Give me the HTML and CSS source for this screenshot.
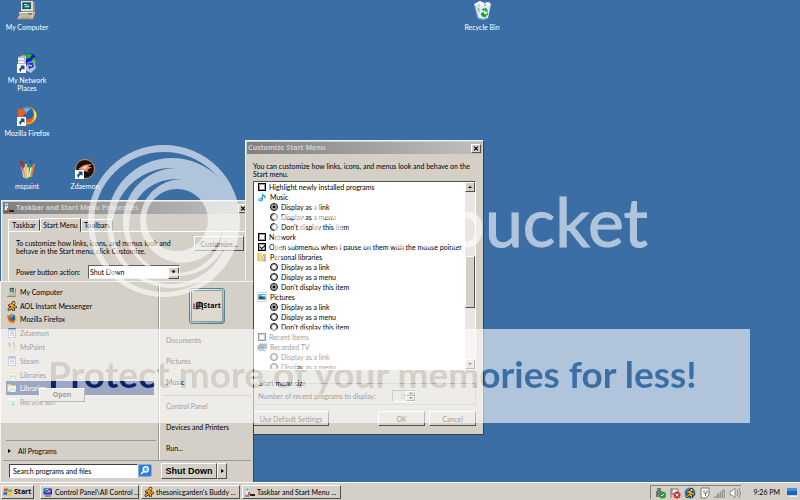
FILE: index.html
```html
<!DOCTYPE html>
<html lang="en">
<head>
<meta charset="utf-8">
<title>Desktop</title>
<link rel="stylesheet" href="styles.css">
</head>
<body>
<svg class="defs" aria-hidden="true">
  <symbol id="computer" viewBox="0 0 20 20"><path d="M5 1h11l2 2v9H5z" fill="#8d8d84"/><path d="M4 1h12v10H4z" fill="#e0dccd"/><path d="M5.500 2.500h8.500v6.500H5.500z" fill="#123"/><path d="M6.500 3.500h7v5h-7z" fill="#1d8a92"/><path d="M7 4h3v1H7zM8 6h4v1H8z" fill="#a9e6df"/><path d="M2 12h16v3H2z" fill="#b9b5a4"/><path d="M3 12h13v1H3z" fill="#f3efdf"/><path d="M11 13.500h4v.8h-4z" fill="#333"/><path d="M3 15h14l-1 4H0z" fill="#d8d4c0"/><path d="M0 18.500h16l1-3.500 1 1-1 4H0z" fill="#777566"/><path d="M4 16h11M3 17.500h11" stroke="#8b887a" stroke-dasharray="1 .6"/></symbol>
  <symbol id="shortcut" viewBox="0 0 9 9"><path d="M0 0h9v9H0z" fill="#fff"/><path d="M3 1.500h4.500V6L6 4.700Q3.500 5.500 4 8 0 5.500 4.500 3z" fill="#124a8d"/></symbol>
  <symbol id="network" viewBox="0 0 20 20"><circle cx="13" cy="7" r="6.500" fill="#1616d2"/><path d="M8 3q4-4 7-1l-2 3-4 1zM14 7l4-3q3 4 0 7z" fill="#24b52c"/><path d="M1 4l6-2 2 1v9H1z" fill="#bbb"/><path d="M1 5h6v2H1zM1 8h6v2H1z" fill="#eee"/><path d="M11 9l6-1 2 7-5 5-6-3z" fill="#b8c4cf"/><path d="M11 10l5-1 1 5-5 2z" fill="#2838c7"/><path d="M12 12l3 1" stroke="#fff"/><use href="#shortcut" x="0" y="11" width="9" height="9"/></symbol>
  <symbol id="fox" viewBox="0 0 20 20"><circle cx="10.500" cy="9.500" r="9" fill="#f0a11d"/><circle cx="10" cy="8" r="7" fill="#1e66ad"/><path d="M6 3q4-3 8 0l-3 2-2 3z" fill="#68b5e4"/><path d="M1 2l3 2q3-1 4 1l2 2-4 2q1 5 6 4 5-1 5-6 3 5-1 8-6 4-11-1Q0 10 1 2z" fill="#e9601c"/><path d="M16 4q3 8-2 12 7-2 5-10z" fill="#ffda45"/></symbol>
  <symbol id="paint" viewBox="0 0 20 20"><path d="M4 8h12l-2 10q-4 3-8 0z" fill="#dce6ec" opacity=".75"/><path d="M5 4l3 14" stroke="#c92f27" stroke-width="2"/><path d="M9 5v14" stroke="#f5c72e" stroke-width="2"/><path d="M13 3l-1 16" stroke="#29a245" stroke-width="2"/><path d="M17 5l-3 13" stroke="#f47c2c" stroke-width="2"/><path d="M3 1l4 2-1 4-3-2z" fill="#8d3d2d"/><path d="M13 0l2 2-1 4-2-3z" fill="#1662bf"/><path d="M7 9v9M11 9v9M14 9l-2 9" stroke="#fff"/></symbol>
  <symbol id="daemon" viewBox="0 0 20 20"><circle cx="10" cy="10" r="9.500" fill="#171311" stroke="#d88d6a"/><path d="M3 10l6-4 8-1-4 3h4l-5 3 2 2-5-1-5 4 2-5z" fill="#e98f67"/><path d="M7 9l6-3-3 4z" fill="#ffe1cc"/></symbol>
  <symbol id="bin" viewBox="0 0 20 20"><path d="M2 4l6-3 5 2 4-1 2 2-3 14q-5 3-10 0z" fill="#dceaf4"/><path d="M3 4l5-3 3 3 5-2 2 3-7 2z" fill="#fff"/><path d="M5 7l3 2-1 5zM12 3l3 2-3 2z" fill="#9bb9e1"/><path d="M5 5l3-1v3z" fill="#efc64c"/><path d="M10 9l4-1 2 3-2 1-1-2-2 1zM9 13l3-1v2h3l-1 3h-3l-2-2zM15 11l1 3-1 2" fill="#18a331"/><path d="M3 6l3 12q5 2 9 0" fill="none" stroke="#8aa9c0"/></symbol>
  <symbol id="man" viewBox="0 0 20 20"><g fill="none" stroke="#201b13" stroke-width="5.500" stroke-linecap="round" stroke-linejoin="round"><path d="M11 8l-2 5 4 2v3M9 13l-5 4M5 9l5-2 4 4 3 1"/></g><circle cx="13" cy="4" r="3.800" fill="#201b13"/><g fill="none" stroke="#f5ac20" stroke-width="2.800" stroke-linecap="round" stroke-linejoin="round"><path d="M11 8l-2 5 4 2v3M9 13l-5 4M5 9l5-2 4 4 3 1"/></g><circle cx="13" cy="4" r="2.500" fill="#ffc63a"/></symbol>
  <symbol id="doc" viewBox="0 0 20 20"><path d="M3 1h14v18H3z" fill="#fff" stroke="#5868a0" stroke-width="1.500"/><path d="M3 1h14v4H3z" fill="#415bb8"/><path d="M6 8h8M6 11h8M6 15h4" stroke="#333a66" stroke-width="1.500"/><path d="M12 13h3v3h-3z" fill="#c44"/></symbol>
  <symbol id="folder" viewBox="0 0 20 20"><path d="M1 3h6l2 2h9v12H1z" fill="#e9bd4e"/><path d="M3 7h15v10H3z" fill="#ffe38a"/><path d="M6 11h11v7H6z" fill="#5da7de"/><path d="M8 14h7v4H8z" fill="#d8f0ff"/></symbol>
  <symbol id="people" viewBox="0 0 20 20"><path d="M1 3l8-2v18l-8-1z" fill="#d9a940"/><path d="M3 2h7v16H3z" fill="#f6d778"/><path d="M12 4h6v15h-7z" fill="#e8bd54"/><path d="M13 7q3 1 1 5l2 5h-5l1-5q-2-4 1-5z" fill="#eef5f8" stroke="#6c8ea0"/></symbol>
  <symbol id="note" viewBox="0 0 20 20"><path d="M11 1q1 4 6 7 2 4-2 6 1-4-3-6v7q0 4-5 4-5 0-5-4 1-4 7-3z" fill="#2e9bda"/><ellipse cx="6" cy="15" rx="3" ry="2" fill="#9be2ff"/></symbol>
  <symbol id="picture" viewBox="0 0 20 20"><path d="M0 1h20v18H0z" fill="#9fb3ba"/><path d="M1 2h18v16H1z" fill="#fff"/><path d="M3 4h14v7H3z" fill="#4fb3ea"/><path d="M3 10l5-2 4 2 5 1v4H3z" fill="#20616e"/><path d="M9 6h7v2H9z" fill="#fff"/></symbol>
  <symbol id="tv" viewBox="0 0 20 20"><path d="M4 3h16v11H4z" fill="#3d6d9b"/><path d="M1 7l13-3v11H1z" fill="#234b7a"/><path d="M4 16h14v2H4z" fill="#57626d"/></symbol>
  <symbol id="flag" viewBox="0 0 20 20"><path d="M2 4q4-3 8 0L9 9Q5 7 1 9z" fill="#e5502c"/><path d="M11 4q4 3 8 0l-1 5q-4 3-8 0z" fill="#6bb33c"/><path d="M1 11q4-3 8 0l-1 6q-4-3-8 0z" fill="#3672d4"/><path d="M10 11q4 3 8 0l-1 6q-4 3-8 0z" fill="#f8c52e"/></symbol>
  <symbol id="oldflag" viewBox="0 0 20 20"><path d="M6 3q7-3 14 1v14q-7-4-14-1z" fill="#111"/><path d="M0 5h5v3H0zM0 9h5v3H0z" fill="#c0503a"/><path d="M0 13h5v3H0z" fill="#3a56b8"/><path d="M7 4q3-1 5 0v5H7z" fill="#d33a2c"/><path d="M13 4l5 1v5l-5-1z" fill="#2fa04a"/><path d="M7 11h5v4H7z" fill="#2b5fd0"/><path d="M13 11l5 1v4l-5-1z" fill="#f0c432"/></symbol>
  <symbol id="control" viewBox="0 0 20 20"><path d="M1 3h17v12H1z" fill="#162fc6"/><path d="M1 3h8v6H1z" fill="#1ba6c2"/><path d="M2 13l7-5 3 1 7-9-5 12H6z" fill="#e64bc1"/><path d="M8 4l6 6" stroke="#fff" stroke-width="2"/><path d="M4 17h12v2H4z" fill="#555"/></symbol>
  <symbol id="settings" viewBox="0 0 20 20"><path d="M2 1h6v13H2z" fill="#eee"/><path d="M3 3h4v4H3z" fill="#28a8df"/><path d="M6 10h4v6H6z" fill="#d65538"/><path d="M10 14h10v4H10z" fill="#222"/><path d="M0 17h8v2H0z" fill="#244e86"/></symbol>
</svg>

<main class="desktop">
  <a class="shortcut mycomputer" href="#"><svg><use href="#computer"/></svg><span>My Computer</span></a>
  <a class="shortcut places" href="#"><svg><use href="#network"/></svg><span>My Network Places</span></a>
  <a class="shortcut firefox" href="#"><svg><use href="#fox"/><use href="#shortcut" x="0" y="11" width="9" height="9"/></svg><span>Mozilla Firefox</span></a>
  <a class="shortcut mspaint" href="#"><svg><use href="#paint"/></svg><span>mspaint</span></a>
  <a class="shortcut zdaemon" href="#"><svg><use href="#daemon"/><use href="#shortcut" x="0" y="11" width="9" height="9"/></svg><span>Zdaemon</span></a>
  <a class="shortcut recycle" href="#"><svg><use href="#bin"/></svg><span>Recycle Bin</span></a>

  <section class="window properties">
    <header class="title"><svg><use href="#settings"/></svg><h2>Taskbar and Start Menu Properties</h2><button class="close" aria-label="Close"><svg viewBox="0 0 8 8"><path d="M1 1l6 6M7 1L1 7"/></svg></button></header>
    <nav class="tabs"><button>Taskbar</button><button class="current">Start Menu</button><button>Toolbars</button></nav>
    <div class="panel">
      <div class="intro"><p>To customize how links, icons, and menus look and<br>behave in the Start menu, click Customize.</p><button class="btn">Customize...</button></div>
      <div class="power"><label for="power">Power button action:</label><span class="drop"><select id="power"><option>Shut Down</option></select></span></div>
    </div>
  </section>

  <section class="window customize">
    <header class="title"><h2>Customize Start Menu</h2><button class="close" aria-label="Close"><svg viewBox="0 0 8 8"><path d="M1 1l6 6M7 1L1 7"/></svg></button></header>
    <div class="content">
      <p>You can customize how links, icons, and menus look and behave on the<br>Start menu.</p>
      <div class="listbox">
        <div class="list">
          <label class="row"><input type="checkbox">Highlight newly installed programs</label>
          <div class="row"><svg><use href="#note"/></svg>Music</div>
          <label class="row sub"><input type="radio" name="music" checked>Display as a link</label>
          <label class="row sub"><input type="radio" name="music">Display as a menu</label>
          <label class="row sub"><input type="radio" name="music">Don't display this item</label>
          <label class="row"><input type="checkbox">Network</label>
          <label class="row"><input type="checkbox" checked>Open submenus when I pause on them with the mouse pointer</label>
          <div class="row"><svg><use href="#people"/></svg>Personal libraries</div>
          <label class="row sub"><input type="radio" name="personal">Display as a link</label>
          <label class="row sub"><input type="radio" name="personal">Display as a menu</label>
          <label class="row sub"><input type="radio" name="personal" checked>Don't display this item</label>
          <div class="row"><svg><use href="#picture"/></svg>Pictures</div>
          <label class="row sub"><input type="radio" name="pictures" checked>Display as a link</label>
          <label class="row sub"><input type="radio" name="pictures">Display as a menu</label>
          <label class="row sub"><input type="radio" name="pictures">Don't display this item</label>
          <label class="row"><input type="checkbox">Recent Items</label>
          <div class="row"><svg><use href="#tv"/></svg>Recorded TV</div>
          <label class="row sub"><input type="radio" name="tv">Display as a link</label>
          <label class="row sub"><input type="radio" name="tv">Display as a menu</label>
        </div>
        <div class="scroll"><button aria-label="Scroll up"><i class="up"></i></button><div class="track"><div class="thumb"></div></div><button aria-label="Scroll down"><i class="down"></i></button></div>
      </div>
      <fieldset><legend>Start menu size</legend><label for="recent">Number of recent programs to display:</label><span class="spinner"><input id="recent" type="text" value="0" disabled><span class="steps"><button aria-label="More"><i class="up"></i></button><button aria-label="Fewer"><i class="down"></i></button></span></span></fieldset>
      <footer><button class="btn wide">Use Default Settings</button><button class="btn">OK</button><button class="btn">Cancel</button></footer>
    </div>
  </section>

  <section class="startmenu">
    <div class="columns">
      <div class="programs">
        <nav class="apps">
          <a href="#"><svg><use href="#computer"/></svg>My Computer</a>
          <a href="#"><svg><use href="#man"/></svg>AOL Instant Messenger</a>
          <a href="#"><svg><use href="#fox"/></svg>Mozilla Firefox</a>
          <a href="#"><svg><use href="#doc"/></svg>Zdaemon</a>
          <a href="#"><svg><use href="#paint"/></svg>MsPaint</a>
          <a href="#"><svg><use href="#doc"/></svg>Steam</a>
          <a href="#"><svg><use href="#folder"/></svg>Libraries</a>
          <a href="#" class="selected"><svg><use href="#folder"/></svg>Libraries</a>
          <a href="#"><svg><use href="#bin"/></svg>Recycle Bin</a>
        </nav>
        <a class="all" href="#"><i class="right"></i>All Programs</a>
      </div>
      <nav class="places-list">
        <div class="user"><div class="photo"><svg><use href="#oldflag"/></svg><b>Start</b></div></div>
        <a href="#">Documents</a><a href="#">Pictures</a><a href="#">Music</a><hr><a href="#">Control Panel</a><a href="#">Devices and Printers</a><a href="#">Run...</a>
      </nav>
    </div>
    <div class="bottom">
      <input class="search" type="text" aria-label="Search" value="Search programs and files">
      <button class="go" aria-label="Search"><svg viewBox="0 0 14 14"><circle cx="8" cy="5.500" r="3.500" fill="#5db7ff" stroke="#fff" stroke-width="1.500"/><path d="M5.500 8L2 11.500" stroke="#fff" stroke-width="2"/></svg></button>
      <div class="shutdown"><button class="main">Shut Down</button><button class="more" aria-label="More"><i class="right"></i></button></div>
    </div>
    <button class="popup">Open</button>
  </section>

  <footer class="taskbar">
    <button class="task start"><svg><use href="#flag"/></svg>Start</button>
    <button class="task"><svg><use href="#control"/></svg>Control Panel\All Control ...</button>
    <button class="task"><svg><use href="#man"/></svg>thesonicgarden's Buddy ...</button>
    <button class="task"><svg><use href="#settings"/></svg>Taskbar and Start Menu ...</button>
    <div class="tray">
      <svg viewBox="0 0 12 12"><path d="M3 1h4v3h1v6H2V4h1z" fill="#777"/><circle cx="8.500" cy="8" r="3.500" fill="#24a237"/><path d="M7 8l1 1 2-2" stroke="#fff" fill="none"/></svg>
      <svg viewBox="0 0 12 12"><path d="M2 1v10M3 2h6v5H3z" stroke="#777" fill="#eee"/><circle cx="8" cy="8" r="3.500" fill="#e12b2b"/><path d="M6.500 6.500l3 3M9.500 6.500l-3 3" stroke="#fff"/></svg>
      <svg viewBox="0 0 12 12"><circle cx="6" cy="6" r="5.500" fill="#2489dc"/><use href="#man" x="1" y="1" width="10" height="10"/></svg>
      <svg viewBox="0 0 12 12"><path d="M2 1h8v7l-3 3H2z" fill="#fff" stroke="#777"/><path d="M5 3v3h3V3M6.500 6v3" stroke="#777" fill="none"/></svg>
      <svg viewBox="0 0 12 12"><path d="M1 11V9h1v2M3.500 11V7h1v4M6 11V5h1v6M8.500 11V3h2v8" fill="#bbb" stroke="#777" stroke-width=".6"/></svg>
      <svg viewBox="0 0 12 12"><path d="M1 4h2l3-3v10L3 8H1z" fill="#fff" stroke="#777" stroke-width=".8"/><path d="M8 3q2 3 0 6M10 1q3 5 0 10" fill="none" stroke="#888"/></svg>
    </div>
    <time>9:26 PM</time>
    <button class="show" aria-label="Show desktop"><svg viewBox="0 0 12 12"><path d="M1 2h10v7H1z" fill="#1c63b9"/><path d="M1 2h10v3H1z" fill="#3e94dc"/><path d="M3 10h8v1H3z" fill="#eee"/></svg></button>
  </footer>

  <svg class="brand" viewBox="0 0 570 160">
    <g fill="#fff" fill-rule="evenodd">
      <path d="M2 78a76 76 0 1 0 152 0a76 76 0 1 0-152 0zM8 79a70 70 0 1 1 140 0a70 70 0 1 1-140 0z"/>
      <path d="M21 80a65 65 0 1 0 130 0a65 65 0 1 0-130 0zM27 83a58 58 0 1 1 116 0a58 58 0 1 1-116 0z"/>
      <path d="M37 79a54 54 0 1 0 108 0a54 54 0 1 0-108 0zM43 83a47 47 0 1 1 94 0a47 47 0 1 1-94 0z"/>
      <path d="M54 78a42 42 0 1 0 84 0a42 42 0 1 0-84 0zM60 77a31 31 0 1 1 62 0a31 31 0 1 1-62 0z"/>
    </g>
    <text x="562" y="104" text-anchor="end">photobucket</text>
  </svg>
  <svg class="banner" viewBox="0 0 750 94">
    <mask id="cutout"><rect width="750" height="94" fill="#fff"/><text x="48" y="59">Protect more of your memories for less!</text></mask>
    <rect width="750" height="94" fill="#fff" mask="url(#cutout)"/>
  </svg>
</main>
</body>
</html>
```
FILE: styles.css
```css
* { box-sizing: border-box; }
body { margin: 0; font: 7px/8px Lato, "Liberation Sans", sans-serif; color: #000; }
button, input, select { font: inherit; color: inherit; margin: 0; padding: 0; border: 0; border-radius: 0; background: none; }
a { color: inherit; text-decoration: none; }
h2, p { margin: 0; font: inherit; }
svg { flex: none; display: block; }
.defs { position: absolute; width: 0; height: 0; }
.desktop { position: relative; height: 100vh; overflow: hidden; background: #3a6ea5; white-space: nowrap; }

.shortcut { position: absolute; display: flex; flex-direction: column; align-items: center; gap: 3px; width: 54px; padding: 0 2px; color: #fff; text-align: center; white-space: normal; }
.shortcut svg { width: 20px; height: 20px; }
.mycomputer { left: 0; top: 0; }
.places { left: 0; top: 53px; }
.firefox { left: 0; top: 106px; }
.mspaint { left: 0; top: 159px; }
.zdaemon { left: 58px; top: 159px; }
.recycle { left: 455px; top: 0; }

.window, .startmenu { position: absolute; background: #d4d0c8; border: 1px solid; border-color: #f4f2ee #404040 #404040 #f4f2ee; }
.window { padding: 1px; }
.title { display: flex; align-items: center; height: 12px; padding: 0 1px; background: linear-gradient(90deg, #808080, #c0c0c0); color: #d4d0c8; }
.title h2 { flex: 1; font-family: "Open Sans", sans-serif; font-weight: bold; }
.title > svg { width: 10px; height: 10px; margin-right: 2px; }
.btn, .close, .scroll button, .thumb, .steps button, .task, .shutdown button, .popup { background: #d4d0c8; border: 1px solid; border-color: #fff #505050 #505050 #fff; }
.close { width: 10px; height: 9px; padding: 1px; }
.close svg { width: 6px; height: 5px; stroke: #000; stroke-width: 2; }
.btn { height: 15px; }

.properties { left: 1px; top: 200px; width: 250px; height: 100px; }
.tabs { display: flex; align-items: flex-end; height: 17px; padding-left: 5px; }
.tabs button { width: 32px; height: 12px; border: 1px solid; border-color: #fff #404040 transparent #fff; background: #d4d0c8; }
.tabs .current { width: 41px; height: 14px; margin-bottom: -1px; }
.panel { margin-left: 5px; padding: 4px 4px 0 7px; border: 1px solid #fff; border-bottom: 0; height: 70px; }
.intro { display: flex; justify-content: space-between; }
.intro p { padding-top: 3px; }
.intro .btn { width: 50px; }
.power { display: flex; align-items: center; gap: 4px; margin-top: 10px; }
.power label { width: 68px; }
.drop { position: relative; width: 92px; height: 14px; border: 1px solid; border-color: #606060 #eee #eee #606060; background: #fff; }
.drop select { appearance: none; width: 100%; height: 12px; padding-left: 1px; }
.drop::after { content: "▼"; position: absolute; right: 0; top: 1px; width: 9px; height: 10px; border: 1px solid; border-color: #fff #505050 #505050 #fff; background: #d4d0c8; font-size: 6px; line-height: 8px; text-align: center; pointer-events: none; }

.customize { left: 245px; top: 140px; width: 239px; }
.content { padding: 8px 6px 7px; }
.listbox { display: flex; justify-content: space-between; height: 189px; margin-top: 3px; border: 1px solid; border-color: #505050 #fff #fff #505050; background: #fff; overflow: hidden; }
.row { display: flex; align-items: center; gap: 3px; height: 10px; padding-left: 4px; }
.row svg { width: 10px; height: 10px; margin: 0 0 0 -1px; }
.sub { padding-left: 16px; }
.row input { appearance: none; flex: none; width: 8px; height: 8px; border: 1px solid #000; outline: 1px solid #0006; outline-offset: -2px; background: #fff; }
.row input[type="radio"] { border-radius: 50%; }
.row input[type="radio"]:checked { background: radial-gradient(circle, #000 0 1px, #fff 2px); }
.row input[type="checkbox"]:checked::after { content: ""; display: block; width: 4px; height: 2px; margin: 1px; border: solid #000; border-width: 0 0 1px 1px; transform: rotate(-45deg); }
.scroll { display: flex; flex-direction: column; width: 10px; background: #e9e7e3; }
.scroll button, .scroll .thumb { display: flex; align-items: center; justify-content: center; width: 10px; height: 10px; }
.scroll .track { flex: 1; padding-top: 64px; }
.scroll .thumb { height: 52px; }
.up, .down, .right { width: 0; height: 0; border: 2px solid transparent; }
.up { border-top: 0; border-bottom-color: #000; }
.down { border-bottom: 0; border-top-color: #000; }
.right { border-right: 0; border-left: 3px solid #000; }
fieldset { display: flex; align-items: center; height: 26px; margin: 9px 0 0; padding: 0 4px; border: 1px solid #aaa; }
legend { padding: 0 1px; }
fieldset label { width: 134px; }
.spinner { display: flex; width: 24px; height: 12px; border: 1px solid; border-color: #808080 #fff #fff #808080; }
.spinner input { width: 13px; text-align: right; color: #808080; padding-right: 1px; }
.steps { display: flex; flex-direction: column; width: 9px; }
.steps button { display: flex; align-items: center; justify-content: center; height: 5px; }
.content footer { display: flex; gap: 4px; margin-top: 6px; }
.content footer .btn { width: 47px; }
.content footer .wide { width: 76px; margin-right: auto; }

.startmenu { left: 0; top: 281px; width: 254px; height: 202px; padding: 2px; display: flex; flex-direction: column; }
.columns { display: flex; flex: 1; }
.programs { width: 156px; padding: 1px 2px 0 3px; display: flex; flex-direction: column; justify-content: space-between; border-right: 1px solid #999; }
.apps { display: grid; grid-template-rows: repeat(9, 1fr); height: 124px; }
.apps a { display: flex; align-items: center; gap: 3px; padding-left: 1px; width: 148px; }
.apps svg { width: 10px; height: 10px; }
.apps .selected { background: #0a246a; color: #fff; }
.all { display: flex; align-items: center; gap: 7px; height: 20px; padding-left: 2px; border-top: 1px solid #999; }
.places-list { flex: 1; display: flex; flex-direction: column; border-left: 1px solid #fff; padding: 4px 0 0 3px; }
.places-list a { height: 21px; padding: 6px 0 0 3px; }
.places-list hr { width: 100%; margin: 2px 0 0; border: 0; border-top: 1px solid #999; }
.user { width: 36px; height: 36px; margin: 0 0 6px 26px; padding: 1px; background: linear-gradient(135deg, #fff, #6aaeb9); border: 1px solid #55858c; border-radius: 3px; }
.photo { display: flex; align-items: center; justify-content: center; height: 32px; background: #ddd9d1; border: 1px solid #999; overflow: hidden; font-family: "Open Sans", sans-serif; }
.photo svg { width: 10px; height: 10px; }
.bottom { display: flex; align-items: center; height: 20px; padding-left: 6px; border-top: 1px solid #999; }
.search { width: 129px; height: 14px; padding: 0 3px; border: 1px solid; border-color: #404040 #fff #fff #404040; background: #fff; }
.go { width: 14px; height: 13px; background: #3579d2; border: 1px solid #78aee8; border-radius: 2px; }
.go svg { width: 12px; height: 11px; }
.shutdown { display: flex; height: 16px; margin-left: 9px; font: bold 9px/10px "Liberation Sans", sans-serif; }
.shutdown .main { width: 56px; }
.shutdown .more { display: flex; align-items: center; justify-content: center; width: 10px; }
.popup { position: absolute; left: 38px; top: 106px; width: 46px; height: 14px; font-family: "Open Sans", sans-serif; font-weight: bold; }

.taskbar { position: absolute; left: 0; right: 0; bottom: 0; display: flex; align-items: center; gap: 2px; height: 18px; padding: 1px 2px 0 1px; background: #d4d0c8; border-top: 1px solid #fff; }
.task { display: flex; align-items: center; gap: 2px; width: 99px; height: 14px; padding: 0 2px; }
.task svg { width: 10px; height: 10px; }
.start { width: 33px; padding: 0 1px; margin-right: 4px; font-family: "Open Sans", sans-serif; font-weight: bold; gap: 1px; }
.tray { display: flex; align-items: center; gap: 3px; height: 14px; margin-left: auto; padding-left: 3px; border-left: 1px solid #808080; border-top: 1px solid #808080; }
.tray svg, .show svg { width: 12px; height: 12px; }
.taskbar time { padding: 0 4px 0 11px; }

.brand, .banner { position: absolute; left: 0; pointer-events: none; opacity: .6; }
.brand { left: 86px; top: 143px; width: 570px; height: 160px; }
.brand text { fill: #fff; stroke: #fff; stroke-width: 1px; font: 68px Lato, sans-serif; }
.banner { top: 329px; width: 750px; height: 94px; }
.banner text { font: bold 37px Lato, sans-serif; }
```
